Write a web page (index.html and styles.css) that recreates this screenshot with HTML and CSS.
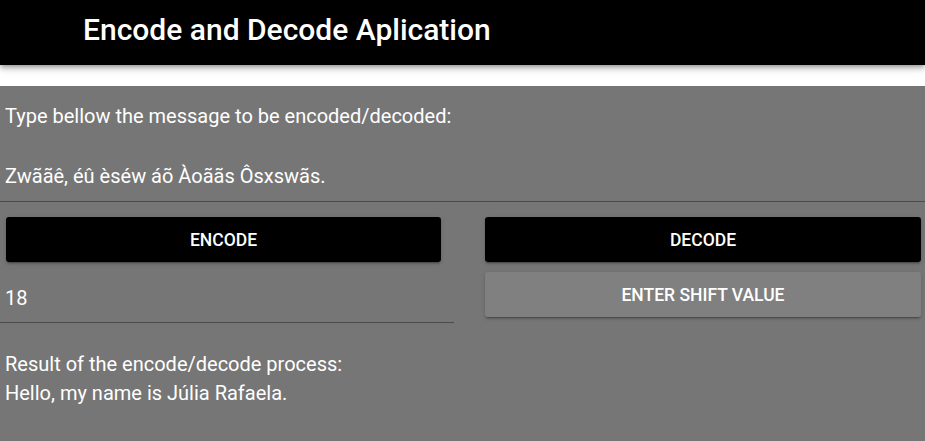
FILE: index.html
```html
<!DOCTYPE html>
<html lang="en">
<head>
<meta charset="utf-8">
<title>Encode and Decode Aplication</title>
<link rel="stylesheet" href="styles.css">
</head>
<body>
<header class="app-bar">
  <h1 class="app-title">Encode and Decode Aplication</h1>
</header>
<main class="content">
  <p class="label">Type bellow the message to be encoded/decoded:</p>
  <p class="message">Zwããê, éû èséw áõ Àoããs Ôsxswãs.</p>
  <div class="divider"></div>
  <div class="controls">
    <div class="col col-left">
      <button class="btn btn-dark">ENCODE</button>
      <div class="shift-input">18</div>
    </div>
    <div class="col col-right">
      <button class="btn btn-dark">DECODE</button>
      <button class="btn btn-gray">ENTER SHIFT VALUE</button>
    </div>
  </div>
  <div class="result">
    <p class="result-line">Result of the encode/decode process:</p>
    <p class="result-line">Hello, my name is Júlia Rafaela.</p>
  </div>
</main>
</body>
</html>
```

FILE: styles.css
```css
html, body {
  margin: 0;
  padding: 0;
  height: 100%;
}
body {
  background: #ffffff;
  font-family: Roboto, "Liberation Sans", sans-serif;
  color: #ffffff;
  display: flex;
  flex-direction: column;
  overflow: hidden;
}
.app-bar {
  height: 65px;
  box-sizing: border-box;
  background: #000000;
  padding: 15px 0 0 83px;
  box-shadow: 0 2px 4px -1px rgba(0,0,0,0.25), 0 4px 5px 0 rgba(0,0,0,0.16), 0 1px 12px 0 rgba(0,0,0,0.14);
  position: relative;
  z-index: 1;
  flex: none;
}
.app-title {
  margin: 0;
  font-size: 30px;
  font-weight: 500;
  line-height: 30px;
  color: #ffffff;
}
.content {
  margin-top: 21px;
  flex: 1;
  background: #767676;
  padding-top: 19px;
}
.label, .message {
  margin: 0;
  padding-left: 5px;
  font-size: 20px;
  line-height: 23px;
}
.message {
  margin-top: 37px;
}
.divider {
  margin-top: 13px;
  height: 1px;
  background: #4b4b4b;
}
.controls {
  display: grid;
  grid-template-columns: 462px 463px;
}
.col {
  display: flex;
  flex-direction: column;
}
.col-left .btn {
  margin: 15px 21px 0 6px;
}
.col-right {
  padding: 0 4px 0 23px;
}
.col-right .btn:first-child {
  margin-top: 15px;
}
.btn {
  height: 45px;
  border: none;
  border-radius: 3px;
  font-family: Roboto, "Liberation Sans", sans-serif;
  font-size: 17.5px;
  font-weight: 500;
  color: #ffffff;
  box-shadow: 0 3px 1px -2px rgba(0,0,0,0.2), 0 2px 2px 0 rgba(0,0,0,0.14), 0 1px 5px 0 rgba(0,0,0,0.12);
  padding: 0;
}
.btn-dark {
  background: #000000;
}
.btn-gray {
  background: #808080;
  margin-top: 10px;
}
.shift-input {
  width: 449px;
  margin-top: 21px;
  padding: 4px 0 12px 5px;
  font-size: 20px;
  line-height: 23px;
  border-bottom: 1px solid #4b4b4b;
}
.result {
  margin-top: 27px;
  padding-left: 5px;
}
.result-line {
  margin: 0;
  font-size: 20px;
  line-height: 29px;
}
```
